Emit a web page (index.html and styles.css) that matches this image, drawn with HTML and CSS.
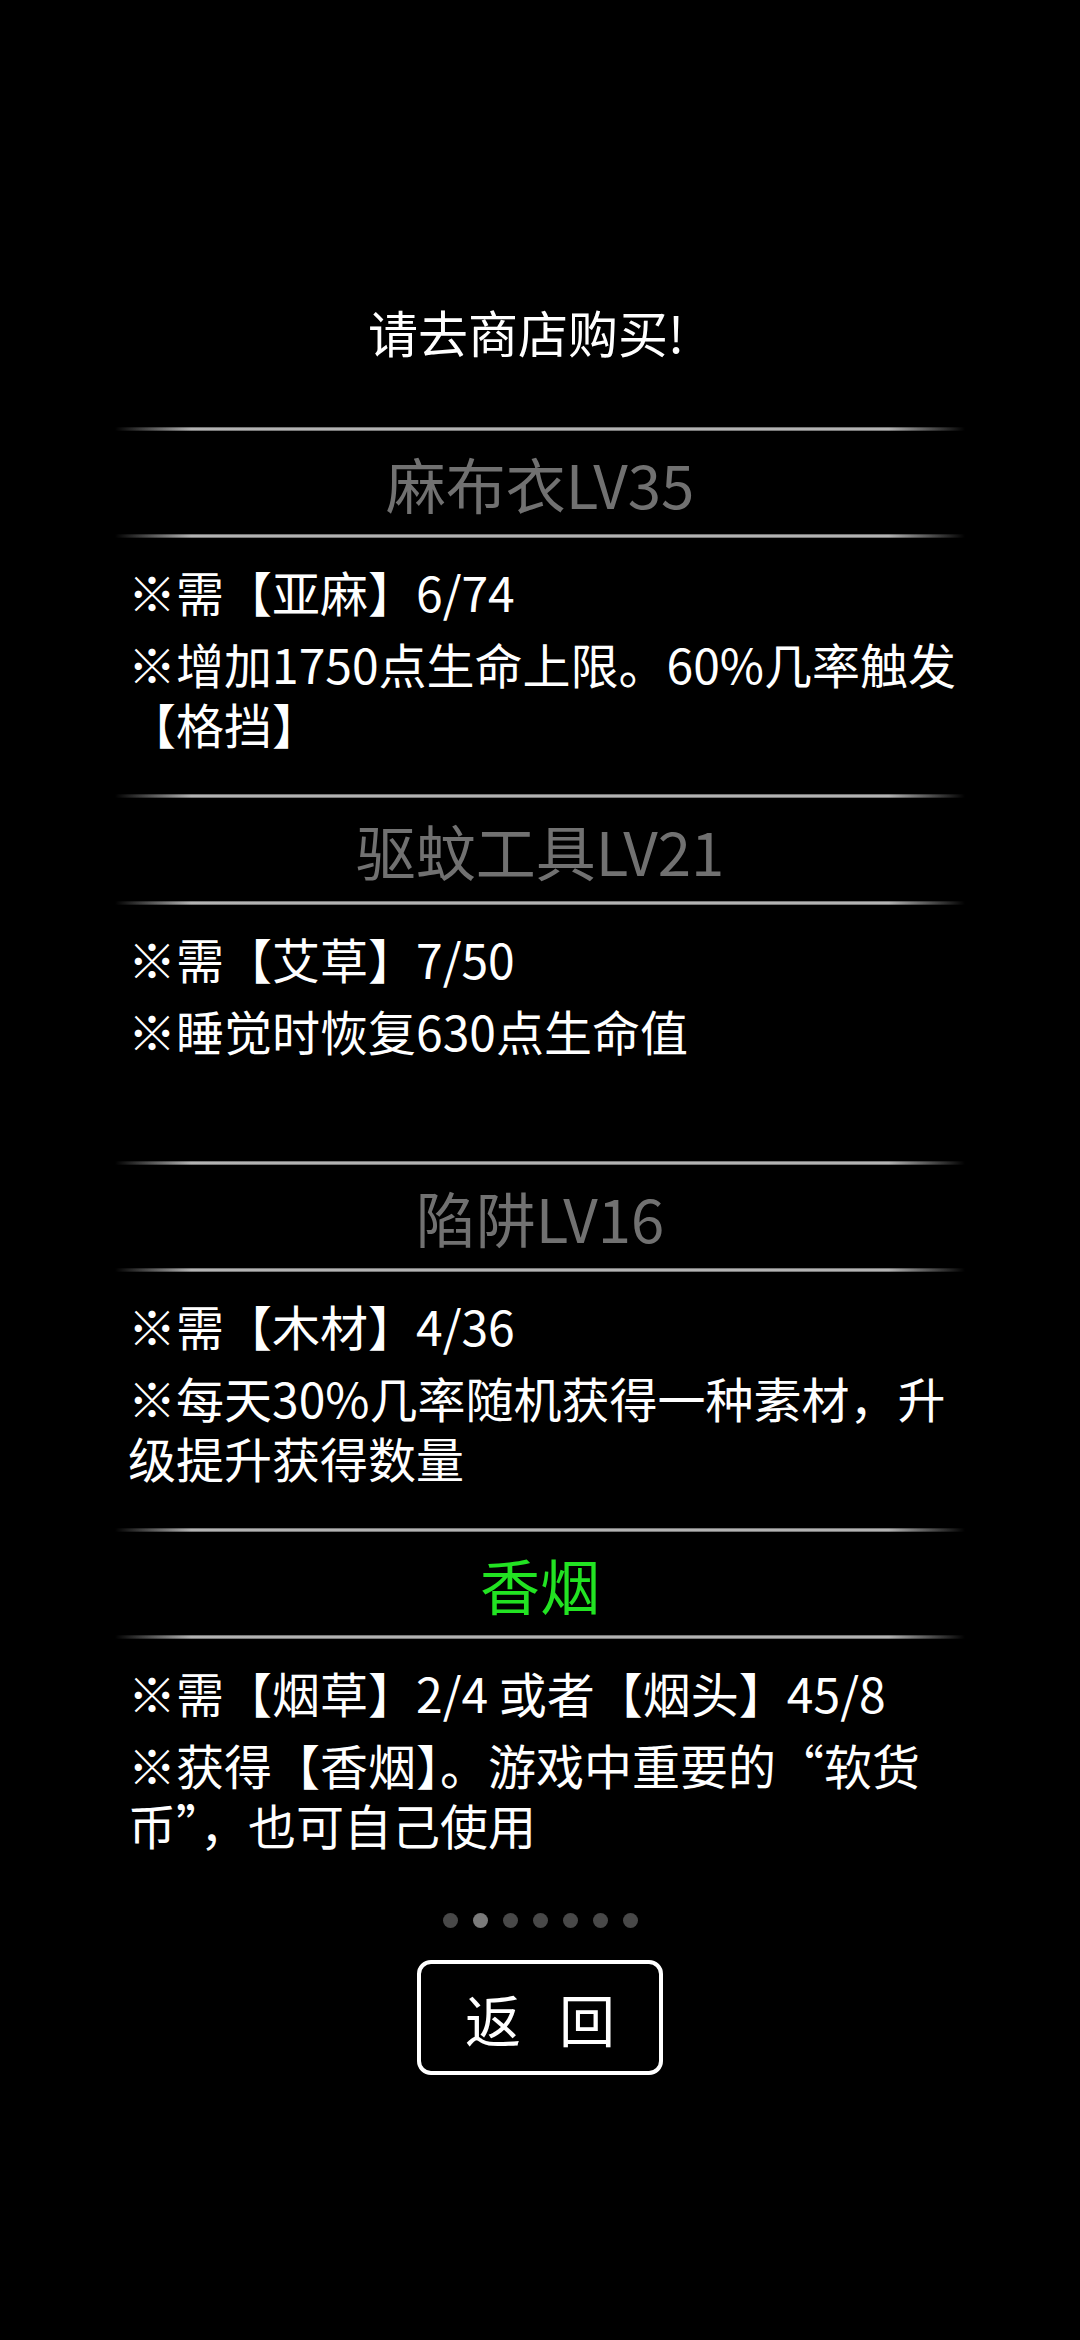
FILE: index.html
```html
<!DOCTYPE html>
<html>
<head>
  <meta charset="utf-8">
  <title>制作</title>
  <link rel="stylesheet" href="styles.css">
</head>
<body>
  <div class="page">
    <div class="tip">请去商店购买!</div>

    <div class="craft-list">
      <div class="craft">
        <div class="craft-name">麻布衣LV35</div>
        <div class="craft-body">
          <p>※需【亚麻】6/74</p>
          <p>※增加1750点生命上限。60%几率触发【格挡】</p>
        </div>
      </div>
      <div class="craft">
        <div class="craft-name">驱蚊工具LV21</div>
        <div class="craft-body">
          <p>※需【艾草】7/50</p>
          <p>※睡觉时恢复630点生命值</p>
        </div>
      </div>
      <div class="craft">
        <div class="craft-name">陷阱LV16</div>
        <div class="craft-body">
          <p>※需【木材】4/36</p>
          <p>※每天30%几率随机获得一种素材，升级提升获得数量</p>
        </div>
      </div>
      <div class="craft">
        <div class="craft-name ready">香烟</div>
        <div class="craft-body">
          <p>※需【烟草】2/4 或者【烟头】45/8</p>
          <p>※获得【香烟】。游戏中重要的“软货币”，也可自己使用</p>
        </div>
      </div>
    </div>

    <div class="pager">
      <span class="dot"></span>
      <span class="dot active"></span>
      <span class="dot"></span>
      <span class="dot"></span>
      <span class="dot"></span>
      <span class="dot"></span>
      <span class="dot"></span>
    </div>

    <div class="back-btn">返回</div>
  </div>
</body>
</html>
```

FILE: styles.css
```css
body {
  margin: 0;
  background-color: #000;
  color: #fff;
  font-family: "Noto Sans CJK SC", "Noto Sans", sans-serif;
}

.page {
  width: 1080px;
  height: 2340px;
  display: flex;
  flex-direction: column;
  align-items: center;
}

.tip {
  margin-top: 301px;
  padding-right: 28px;
  font-size: 50px;
  line-height: 60px;
}

.craft-list {
  width: 850px;
  margin-top: 66px;
}

.craft {
  height: 367px;
  display: flex;
  flex-direction: column;
}

/* name row sits between two fading rules */
.craft-name {
  position: relative;
  flex: none;
  height: 103px;
  margin: 4px 0;
  display: flex;
  align-items: center;
  justify-content: center;
  font-size: 60px;
  color: #717171;
}

.craft-name::before,
.craft-name::after {
  content: "";
  position: absolute;
  left: 0;
  right: 0;
  height: 4px;
  background: linear-gradient(#5a5a5a, #d0d0d0 50%, #5a5a5a);
  -webkit-mask-image: linear-gradient(90deg, transparent, #000 9%, #000 91%, transparent);
  mask-image: linear-gradient(90deg, transparent, #000 9%, #000 91%, transparent);
}

.craft-name::before {
  top: -4px;
}

.craft-name::after {
  bottom: -4px;
}

.craft-name.ready {
  color: #22e322;
}

.craft-body {
  padding: 23px 6px 0 13px;
  font-size: 48px;
  line-height: 60px;
}

.craft-body p {
  margin: 0 0 12px 0;
}

.pager {
  display: flex;
  gap: 15px;
  margin-top: 18px;
}

.dot {
  width: 15px;
  height: 15px;
  border-radius: 50%;
  background-color: #484848;
}

.dot.active {
  background-color: #7a7a7a;
}

.back-btn {
  box-sizing: border-box;
  width: 246px;
  height: 115px;
  margin-top: 32px;
  border: 4px solid #fff;
  border-radius: 14px;
  display: flex;
  align-items: center;
  justify-content: center;
  padding-left: 38px;
  font-size: 56px;
  letter-spacing: 38px;
}
```
